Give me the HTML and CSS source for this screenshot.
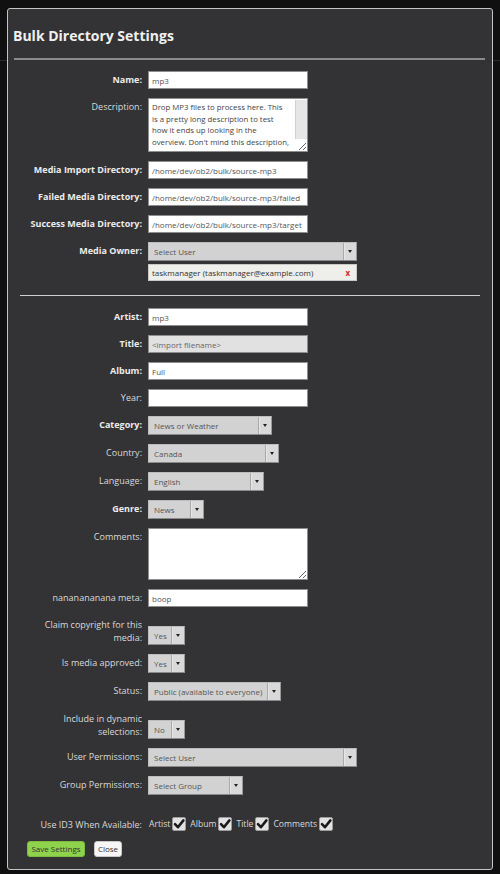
FILE: index.html
```html
<!DOCTYPE html>
<html lang="en">
<head>
<meta charset="utf-8">
<title>Bulk Directory Settings</title>
<link rel="stylesheet" href="styles.css">
</head>
<body>
<div class="page"><div class="page-header"></div></div>

<div class="modal">
  <h1 class="modal-title">Bulk Directory Settings</h1>
  <div class="rule-thick"></div>

  <div class="form">
    <div class="row">
      <label class="lbl strong">Name:</label>
      <div class="field"><input class="text" value="mp3"></div>
    </div>
    <div class="row">
      <label class="lbl">Description:</label>
      <div class="field"><textarea class="area desc">Drop MP3 files to process here. This is a pretty long description to test how it ends up looking in the overview. Don't mind this description, it is just here for testing purposes.</textarea></div>
    </div>
    <div class="row">
      <label class="lbl strong">Media Import Directory:</label>
      <div class="field"><input class="text" value="/home/dev/ob2/bulk/source-mp3"></div>
    </div>
    <div class="row">
      <label class="lbl strong">Failed Media Directory:</label>
      <div class="field"><input class="text" value="/home/dev/ob2/bulk/source-mp3/failed"></div>
    </div>
    <div class="row">
      <label class="lbl strong">Success Media Directory:</label>
      <div class="field"><input class="text" value="/home/dev/ob2/bulk/source-mp3/target"></div>
    </div>
    <div class="row row-last">
      <label class="lbl strong">Media Owner:</label>
      <div class="field">
        <div class="select w-wide"><span class="val">Select User</span><span class="arrow"></span></div>
        <div class="chosen"><span>taskmanager (taskmanager@example.com)</span><span class="remove">x</span></div>
      </div>
    </div>

    <div class="rule-thin"></div>

    <div class="row">
      <label class="lbl strong">Artist:</label>
      <div class="field"><input class="text" value="mp3"></div>
    </div>
    <div class="row">
      <label class="lbl strong">Title:</label>
      <div class="field"><input class="text locked" placeholder="<import filename>"></div>
    </div>
    <div class="row">
      <label class="lbl strong">Album:</label>
      <div class="field"><input class="text" value="Full"></div>
    </div>
    <div class="row">
      <label class="lbl">Year:</label>
      <div class="field"><input class="text" value=""></div>
    </div>
    <div class="row">
      <label class="lbl strong">Category:</label>
      <div class="field"><div class="select w-category"><span class="val">News or Weather</span><span class="arrow"></span></div></div>
    </div>
    <div class="row">
      <label class="lbl">Country:</label>
      <div class="field"><div class="select w-country"><span class="val">Canada</span><span class="arrow"></span></div></div>
    </div>
    <div class="row">
      <label class="lbl">Language:</label>
      <div class="field"><div class="select w-language"><span class="val">English</span><span class="arrow"></span></div></div>
    </div>
    <div class="row">
      <label class="lbl strong">Genre:</label>
      <div class="field"><div class="select w-genre"><span class="val">News</span><span class="arrow"></span></div></div>
    </div>
    <div class="row">
      <label class="lbl">Comments:</label>
      <div class="field"><textarea class="area comments"></textarea></div>
    </div>
    <div class="row">
      <label class="lbl">nananananana meta:</label>
      <div class="field"><input class="text" value="boop"></div>
    </div>
    <div class="row">
      <label class="lbl">Claim copyright for this media:</label>
      <div class="field"><div class="select w-yes drop"><span class="val">Yes</span><span class="arrow"></span></div></div>
    </div>
    <div class="row">
      <label class="lbl">Is media approved:</label>
      <div class="field"><div class="select w-yes"><span class="val">Yes</span><span class="arrow"></span></div></div>
    </div>
    <div class="row">
      <label class="lbl">Status:</label>
      <div class="field"><div class="select w-status"><span class="val">Public (available to everyone)</span><span class="arrow"></span></div></div>
    </div>
    <div class="row">
      <label class="lbl">Include in dynamic selections:</label>
      <div class="field"><div class="select w-yes drop"><span class="val">No</span><span class="arrow"></span></div></div>
    </div>
    <div class="row">
      <label class="lbl">User Permissions:</label>
      <div class="field"><div class="select w-wide"><span class="val">Select User</span><span class="arrow"></span></div></div>
    </div>
    <div class="row">
      <label class="lbl">Group Permissions:</label>
      <div class="field"><div class="select w-group"><span class="val">Select Group</span><span class="arrow"></span></div></div>
    </div>

    <div class="row row-id3">
      <label class="lbl">Use ID3 When Available:</label>
      <div class="field checks">
        <span class="check-item">Artist<span class="box"><svg viewBox="0 0 14 14" width="14" height="14"><path d="M3 7.2 L5.9 10.2 L11.4 3.4" fill="none" stroke="#1a1a1a" stroke-width="2.6" stroke-linecap="round" stroke-linejoin="round"/></svg></span></span>
        <span class="check-item">Album<span class="box"><svg viewBox="0 0 14 14" width="14" height="14"><path d="M3 7.2 L5.9 10.2 L11.4 3.4" fill="none" stroke="#1a1a1a" stroke-width="2.6" stroke-linecap="round" stroke-linejoin="round"/></svg></span></span>
        <span class="check-item">Title<span class="box"><svg viewBox="0 0 14 14" width="14" height="14"><path d="M3 7.2 L5.9 10.2 L11.4 3.4" fill="none" stroke="#1a1a1a" stroke-width="2.6" stroke-linecap="round" stroke-linejoin="round"/></svg></span></span>
        <span class="check-item">Comments<span class="box"><svg viewBox="0 0 14 14" width="14" height="14"><path d="M3 7.2 L5.9 10.2 L11.4 3.4" fill="none" stroke="#1a1a1a" stroke-width="2.6" stroke-linecap="round" stroke-linejoin="round"/></svg></span></span>
      </div>
    </div>
  </div>

  <div class="actions">
    <button class="btn btn-save">Save Settings</button>
    <button class="btn btn-close">Close</button>
  </div>
</div>
<script src="script.js"></script>
</body>
</html>
```

FILE: styles.css
```css
* { box-sizing: border-box; }

html, body {
  margin: 0;
  height: 100%;
}

body {
  position: relative;
  overflow: hidden;
  background: #101010;
  font-family: "Open Sans", "DejaVu Sans", sans-serif;
}

.page-header {
  height: 61px;
  border-bottom: 1px solid #2c2c2c;
}

.modal {
  position: absolute;
  left: 7px;
  top: 8px;
  width: 486px;
  height: 862px;
  background: #333335;
  border: 1px solid #c4c4c4;
  border-radius: 3px;
}

.modal-title {
  margin: 17px 0 0 5px;
  font-size: 14px;
  line-height: 19px;
  font-weight: 700;
  color: #f0f0f0;
}

.rule-thick {
  height: 2px;
  margin: 13px 7px 0 6px;
  background: #8a8a8a;
}

.form {
  padding-top: 11px;
}

.row {
  display: grid;
  grid-template-columns: 134px 1fr;
  column-gap: 6px;
  align-items: start;
  margin-bottom: 9px;
}

.row-last { margin-bottom: 0; }

.lbl {
  text-align: right;
  font-size: 9px;
  line-height: 13px;
  padding: 2px 0 0 21px;
  color: #dadada;
}

.lbl.strong {
  font-weight: 700;
  color: #ececec;
}

.text {
  display: block;
  width: 160px;
  height: 18px;
  margin: 0;
  padding: 0 3px;
  border: 1px solid #8e8e8e;
  border-radius: 0;
  background: #fff;
  font: 8px "Open Sans", sans-serif;
  color: #555;
  outline: none;
}

.text.locked { background: #e1e1e1; }
.text.locked::placeholder { color: #666; opacity: 1; }

.area {
  display: block;
  width: 160px;
  margin: 0;
  padding: 3px;
  border: 1px solid #8e8e8e;
  border-radius: 0;
  background: #fff;
  font: 7.75px/11.5px "Open Sans", sans-serif;
  color: #444;
  outline: none;
}

.desc {
  height: 54px;
  padding-right: 16px;
  overflow: hidden;
  background: linear-gradient(to right, #d2d2d2 0 1px, #e6e6e6 1px) no-repeat right 0 top 1px / 12px 39px, #fff;
}

.comments { height: 52px; }

.probe {
  position: absolute;
  visibility: hidden;
  white-space: pre;
  font-family: "Open Sans", sans-serif;
}

.select {
  display: flex;
  height: 19px;
  border: 1px solid;
  border-color: #bdbdbd #9a9a9a #8a8a8a #bdbdbd;
  background: #d2d2d2;
  font-size: 8px;
  color: #555;
}

.select .val {
  flex: 1;
  padding-left: 5px;
  line-height: 17px;
  white-space: nowrap;
  overflow: hidden;
}

.select .arrow {
  width: 13px;
  display: flex;
  align-items: center;
  justify-content: center;
  border-left: 1px solid #a9a9a9;
  box-shadow: inset 1px 0 #e6e6e6;
  background: #d9d9d9;
}

.select .arrow::after {
  content: "";
  border-left: 2.5px solid transparent;
  border-right: 2.5px solid transparent;
  border-top: 3px solid #222;
}

.select.drop { margin-top: 10px; }

.w-wide { width: 209px; }
.w-category { width: 124px; }
.w-country { width: 131px; }
.w-language { width: 116px; }
.w-genre { width: 56px; }
.w-yes { width: 37px; }
.w-status { width: 133px; }
.w-group { width: 95px; }

.chosen {
  display: flex;
  align-items: center;
  justify-content: space-between;
  width: 209px;
  height: 17px;
  margin-top: 3px;
  padding: 0 6px 0 3px;
  background: #eeeeea;
  border: 1px solid #c9c9c5;
  font-size: 8px;
  color: #333;
}

.chosen .remove {
  color: #d42a2a;
  font-weight: 700;
}

.rule-thin {
  height: 1px;
  margin: 14px 12px 12px;
  background: #cfcfcf;
}

.row-id3 {
  align-items: center;
  margin-top: 22px;
  margin-bottom: 0;
}

.row-id3 .lbl { padding-top: 0; }

.checks {
  display: flex;
  align-items: center;
  height: 14px;
  padding-left: 1px;
  gap: 4px;
}

.check-item {
  display: flex;
  align-items: center;
  gap: 2px;
  font-size: 8.6px;
  color: #dadada;
}

.box {
  display: block;
  width: 14px;
  height: 14px;
  border: 1px solid #9c9c9c;
  border-radius: 2px;
  background: #e2e2e2;
  overflow: visible;
}

.box svg {
  display: block;
  margin: -1px 0 0 -1px;
}

.actions {
  display: flex;
  gap: 9px;
  margin-top: 10px;
  padding-left: 19px;
}

.btn {
  height: 16px;
  margin: 0;
  padding: 0;
  border-radius: 3px;
  font: 8px/14px "Open Sans", sans-serif;
  color: #333;
  cursor: pointer;
}

.btn-save {
  width: 58px;
  background: #8fd24c;
  border: 1px solid #7dbb3e;
}

.btn-close {
  width: 28px;
  background: #f6f6f6;
  border: 1px solid #c8c8c8;
}
```

FILE: script.js
```js
// Fit the description box so its text wraps like the original overview:
// pick a font size (near 7.8px) and a content width that sits between the
// longest line that must fit and the shortest line that must break.
(function () {
  var ta = document.querySelector('.desc');
  if (!ta) return;
  var probe = document.createElement('span');
  probe.className = 'probe';
  document.body.appendChild(probe);

  function width(text, size) {
    probe.style.fontSize = size + 'px';
    probe.textContent = text;
    return probe.getBoundingClientRect().width;
  }

  var mustFit = [
    'Drop MP3 files to process here. This',
    'is a pretty long description to test',
    'how it ends up looking in the',
    "overview. Don't mind this description,"
  ];
  var mustBreak = [
    'Drop MP3 files to process here. This is',
    'is a pretty long description to test how',
    'how it ends up looking in the overview.'
  ];

  var best = null;
  for (var s = 7.5; s <= 8.31; s += 0.05) {
    var size = Math.round(s * 100) / 100;
    var fit = Math.max.apply(null, mustFit.map(function (t) { return width(t, size); }));
    var brk = Math.min.apply(null, mustBreak.map(function (t) { return width(t, size); }));
    var room = brk - fit;
    if (room > 0.6) {
      var score = Math.abs(size - 7.8) - room * 0.02;
      if (!best || score < best.score) best = { size: size, w: (fit + brk) / 2, score: score };
    }
  }
  probe.remove();
  if (!best) return;
  var pad = 160 - 2 - 3 - best.w;
  ta.style.fontSize = best.size + 'px';
  ta.style.paddingRight = pad.toFixed(2) + 'px';
})();
```
